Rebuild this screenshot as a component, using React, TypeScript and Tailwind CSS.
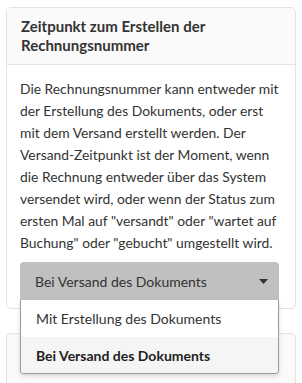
import { useState } from "react";

const OPTIONS = ["Mit Erstellung des Dokuments", "Bei Versand des Dokuments"];

const HELP_LINES = [
  "Die Rechnungsnummer kann entweder mit",
  "der Erstellung des Dokuments, oder erst",
  "mit dem Versand erstellt werden. Der",
  "Versand-Zeitpunkt ist der Moment, wenn",
  "die Rechnung entweder über das System",
  "versendet wird, oder wenn der Status zum",
  'ersten Mal auf "versandt" oder "wartet auf',
  'Buchung" oder "gebucht" umgestellt wird.',
];

export default function App() {
  const [value, setValue] = useState(OPTIONS[1]);

  return (
    <div
      className="h-[383px] w-[302px] overflow-hidden bg-white text-[#333]"
      style={{ fontFamily: "Lato, 'Open Sans', sans-serif" }}
    >
      <div className="flex flex-col gap-6 pl-[6px] pr-[6px] pt-[7px]">
        {/* Setting card */}
        <div className="rounded-[5px] border border-[#e3e3e3] bg-white">
          <div className="rounded-t-[5px] border-b border-[#e3e3e3] bg-[#fafafa] px-[14px] py-[9px]">
            <h2 className="text-[15px] font-bold leading-[19px] text-[#333]">
              Zeitpunkt zum Erstellen der Rechnungsnummer
            </h2>
          </div>
          <div className="px-[14px] pb-2 pt-[13px]">
            <p className="-ml-px -mr-[12px] text-[13.85px] leading-[22px] text-[#333]">
              {HELP_LINES.map((line, i) => (
                <span key={i} className="block whitespace-nowrap">
                  {line}
                </span>
              ))}
            </p>

            <div className="relative -ml-px mr-[2px] mt-2">
              <button
                type="button"
                className="flex h-[38px] w-full items-center justify-between rounded-t-[4px] bg-[#c0c0c0] pl-[15px] pr-[11px] text-left text-[14px] text-[#333]"
              >
                <span>{value}</span>
                <svg width="9" height="5" viewBox="0 0 9 5">
                  <path d="M0 0h9L4.5 5z" fill="#333" />
                </svg>
              </button>

              {/* Open menu */}
              <ul className="absolute left-0 right-0 top-[38px] z-10 overflow-hidden rounded-b-[4px] border border-t-0 border-[#9a9a9a] bg-white shadow-[0_2px_4px_rgba(0,0,0,0.15)]">
                {OPTIONS.map((opt) => (
                  <li
                    key={opt}
                    onClick={() => setValue(opt)}
                    className={
                      opt === value
                        ? "flex h-[36px] items-center bg-[#f5f5f5] pl-[15px] text-[14px] font-bold text-[#222]"
                        : "flex h-[37px] items-center pl-[15px] text-[14px] text-[#333]"
                    }
                  >
                    {opt}
                  </li>
                ))}
              </ul>
            </div>
          </div>
        </div>

        {/* Next card, partly visible */}
        <div className="h-[80px] shrink-0 rounded-[5px] border border-[#e3e3e3] bg-[#fafafa]" />
      </div>
    </div>
  );
}
